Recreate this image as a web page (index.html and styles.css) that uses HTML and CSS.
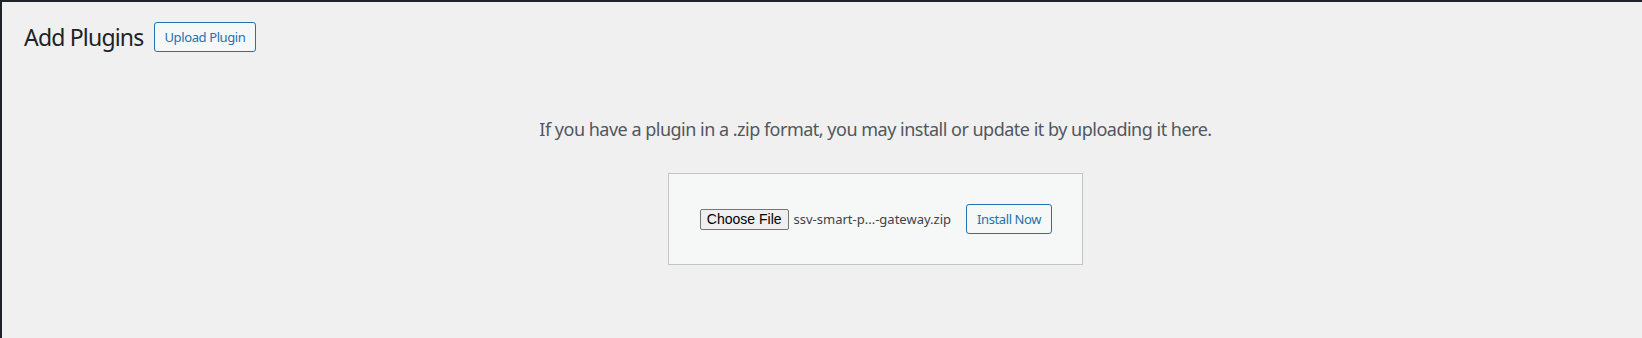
FILE: index.html
```html
<!DOCTYPE HTML>
<html>
<head>
  <title>Add Plugins</title>
  <meta name="viewport" content="width=device-width, initial-scale=1">
  <link rel="stylesheet" href="styles.css">
</head>
<body>
  <div class="admin-frame">
    <div class="wrap">
      <div class="page-head">
        <h1>Add Plugins</h1>
        <a class="page-title-action" href="#">Upload Plugin</a>
      </div>

      <div class="upload-plugin">
        <p class="install-help">If you have a plugin in a .zip format, you may install or update it by uploading it here.</p>
        <form class="upload-form" onsubmit="return false;">
          <span class="file-field">
            <button type="button" class="file-btn">Choose File</button>
            <span class="file-name">ssv-smart-p...-gateway.zip</span>
          </span>
          <button type="submit" class="button">Install Now</button>
        </form>
      </div>
    </div>
  </div>
</body>
</html>
```

FILE: styles.css
```css
/* admin page base */
html {
  overflow: hidden;
}

body {
  margin: 0;
  background-color: #1d2327;
  font-family: "Noto Sans", Arial, sans-serif;
  font-size: 13px;
  letter-spacing: -0.03em;
  color: #3c434a;
}

.admin-frame {
  margin: 2px 0 0 2px;
  height: 336px;
  background-color: #f0f0f1;
}

.wrap {
  padding: 20px 0 0 20px;
}

.page-head {
  display: flex;
  align-items: center;
  gap: 10px;
}

h1 {
  margin: 0 0 0 2px;
  font-size: 23px;
  font-weight: 400;
  line-height: 30px;
  letter-spacing: -0.035em;
  color: #1d2327;
}

.page-title-action {
  display: inline-block;
  box-sizing: border-box;
  height: 30px;
  padding: 0 10px;
  line-height: 28px;
  font-size: 13px;
  color: #2271b1;
  background-color: #f6f7f7;
  border: 1px solid #2271b1;
  border-radius: 3px;
  text-decoration: none;
}

/* upload box */
.upload-plugin {
  margin-right: -87px;
  text-align: center;
}

.install-help {
  margin: 0;
  padding-top: 65px;
  font-size: 18px;
  line-height: 25px;
  letter-spacing: -0.5px;
  color: #50575e;
}

.upload-form {
  display: inline-flex;
  align-items: center;
  justify-content: space-between;
  gap: 15px;
  margin: 31px auto 0;
  padding: 30px;
  background-color: #f6f7f7;
  border: 1px solid #c3c4c7;
}

.file-field {
  display: inline-flex;
  align-items: center;
  gap: 5px;
}

.file-btn {
  box-sizing: border-box;
  height: 21px;
  margin-left: 1px;
  padding: 0 6px;
  font-family: "Liberation Sans", Arial, sans-serif;
  font-size: 14px;
  letter-spacing: 0;
  color: #000;
  background-color: #efefef;
  border: 1px solid #767676;
  border-radius: 2px;
}

.file-name {
  font-size: 13px;
  letter-spacing: 0;
  color: #3c434a;
}

.button {
  box-sizing: border-box;
  height: 30px;
  padding: 0 10px;
  font-family: inherit;
  font-size: 13px;
  letter-spacing: inherit;
  color: #2271b1;
  background-color: #f6f7f7;
  border: 1px solid #2271b1;
  border-radius: 3px;
  cursor: pointer;
}
```
